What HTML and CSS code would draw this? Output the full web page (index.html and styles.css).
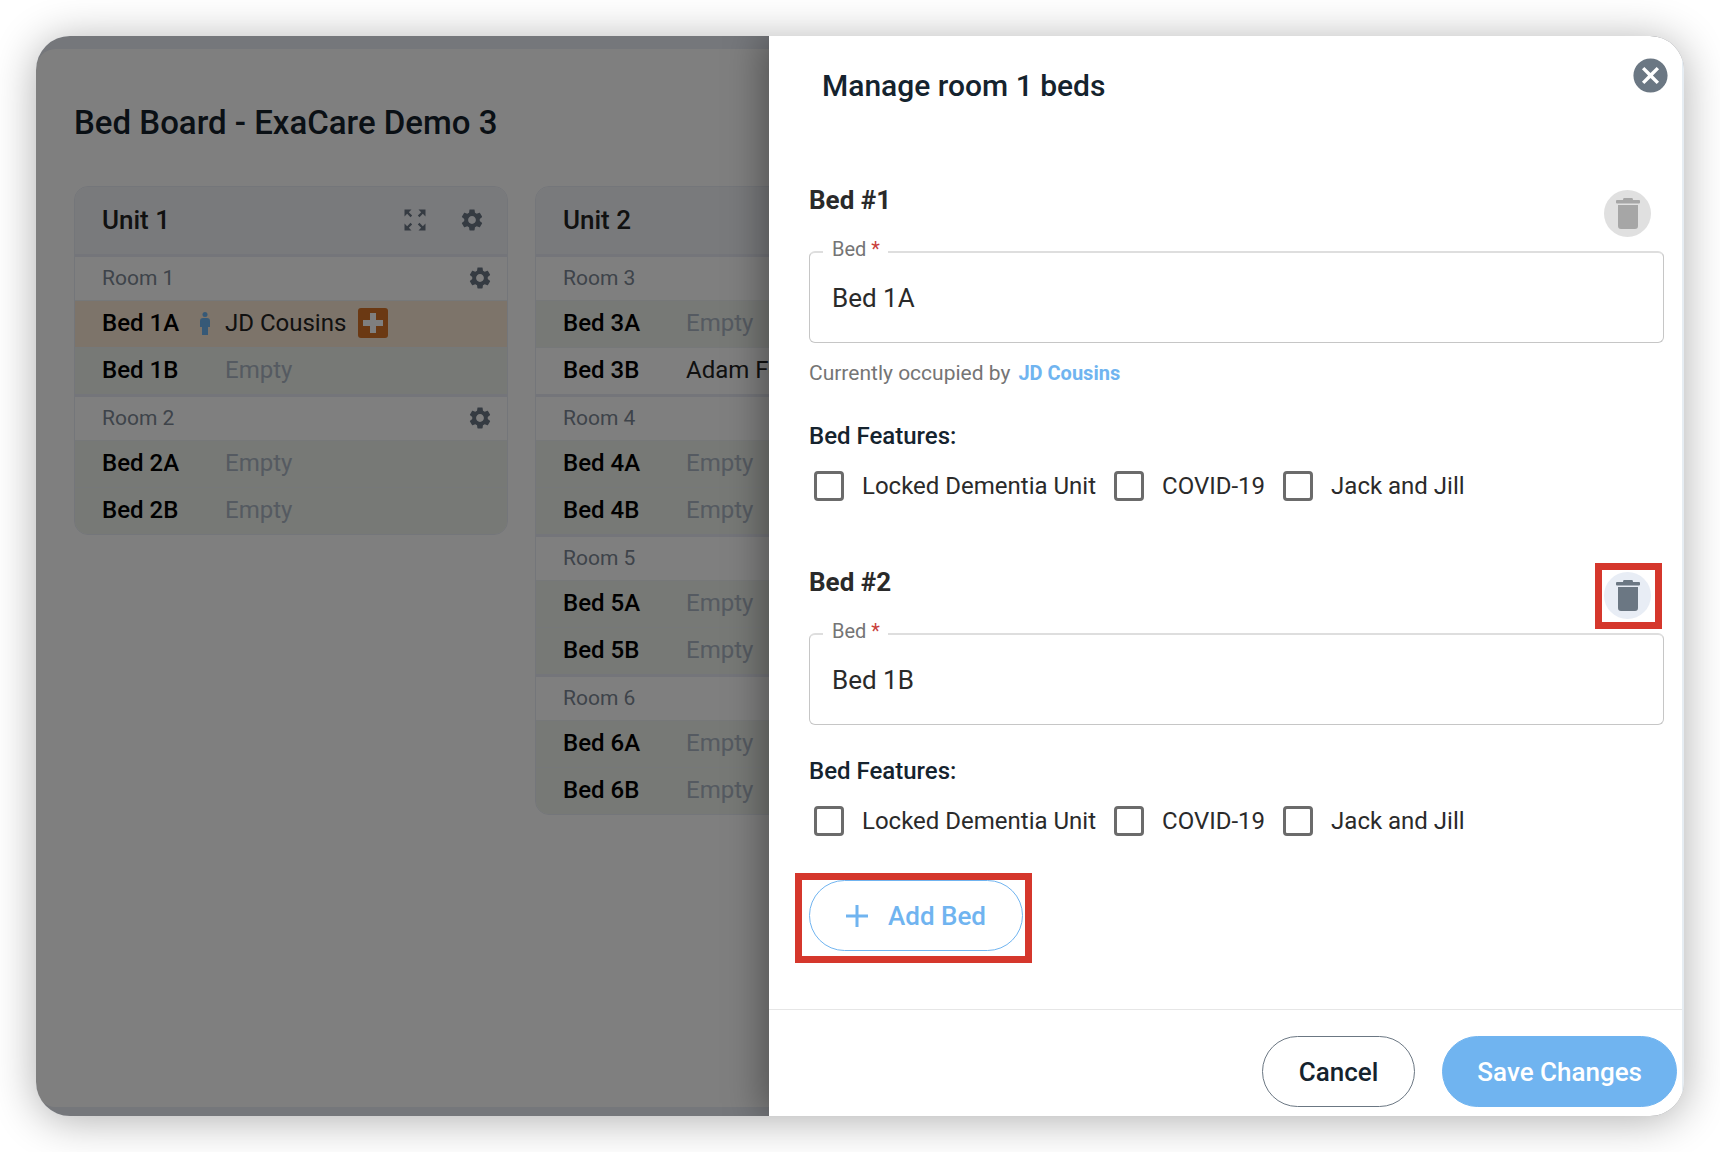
FILE: index.html
```html
<!DOCTYPE html>
<html lang="en">
<head>
<meta charset="utf-8">
<title>Bed Board</title>
<link rel="stylesheet" href="styles.css">
</head>
<body>
<svg class="sprite" aria-hidden="true">
  <symbol id="gear" viewBox="0 0 24 24"><path d="M19.14 12.94c.04-.3.06-.61.06-.94 0-.32-.02-.64-.07-.94l2.03-1.58c.18-.14.23-.41.12-.61l-1.92-3.32c-.12-.22-.37-.29-.59-.22l-2.39.96c-.5-.38-1.03-.7-1.62-.94l-.36-2.54c-.04-.24-.24-.41-.48-.41h-3.84c-.24 0-.43.17-.47.41l-.36 2.54c-.59.24-1.13.57-1.62.94l-2.39-.96c-.22-.08-.47 0-.59.22L2.74 8.87c-.12.21-.08.47.12.61l2.03 1.58c-.05.3-.09.63-.09.94s.02.64.07.94l-2.03 1.58c-.18.14-.23.41-.12.61l1.92 3.32c.12.22.37.29.59.22l2.39-.96c.5.38 1.03.7 1.62.94l.36 2.54c.05.24.24.41.48.41h3.84c.24 0 .44-.17.47-.41l.36-2.54c.59-.24 1.13-.56 1.62-.94l2.39.96c.22.08.47 0 .59-.22l1.92-3.32c.12-.22.07-.47-.12-.61l-2.01-1.58zM12 15.6c-1.98 0-3.6-1.62-3.6-3.6s1.62-3.6 3.6-3.6 3.6 1.62 3.6 3.6-1.62 3.6-3.6 3.6z"/></symbol>
  <symbol id="expand" viewBox="0 0 24 24"><path d="M15 3l2.3 2.3-2.89 2.87 1.42 1.42L18.7 6.7 21 9V3zM3 9l2.3-2.3 2.87 2.89 1.42-1.42L6.7 5.3 9 3H3zm6 12l-2.3-2.3 2.89-2.87-1.42-1.42L5.3 17.3 3 15v6zm12-6l-2.3 2.3-2.87-2.89-1.42 1.42 2.89 2.87L15 21h6z"/></symbol>
  <symbol id="trash" viewBox="0 0 24 31"><path d="M8 0h8q1 0 1 2h6q1 0 1 1v1.500q0 1-1 1H1q-1 0-1-1V3q0-1 1-1h6q0-2 1-2zM2 7h20v21q0 3-3 3H5q-3 0-3-3z"/></symbol>
  <symbol id="close" viewBox="0 0 24 24"><path d="M12 2C6.470 2 2 6.470 2 12s4.470 10 10 10 10-4.470 10-10S17.530 2 12 2zm5 13.590L15.590 17 12 13.410 8.410 17 7 15.590 10.590 12 7 8.410 8.410 7 12 10.590 15.590 7 17 8.410 13.410 12 17 15.590z"/></symbol>
  <symbol id="person" viewBox="0 0 10 23"><circle cx="5" cy="2.500" r="2.500"/><path d="M3 6h4q3 0 3 3v6H8v8H2v-8H0V9q0-3 3-3z"/></symbol>
</svg>

<div class="window">
  <main class="board">
    <h1 class="board-title">Bed Board - ExaCare Demo 3</h1>
    <div class="units">
      <section class="unit">
        <header class="unit-head">
          <h2>Unit 1</h2>
          <button class="icon-btn" aria-label="Expand unit 1"><svg width="28" height="28"><use href="#expand"/></svg></button>
          <button class="icon-btn" aria-label="Unit 1 settings"><svg width="26" height="26"><use href="#gear"/></svg></button>
        </header>
        <div class="room">
          <div class="room-head"><h3>Room 1</h3><button class="icon-btn" aria-label="Room 1 settings"><svg width="26" height="26"><use href="#gear"/></svg></button></div>
          <ul>
            <li class="bed hospital"><b>Bed 1A</b><svg class="person" width="10" height="23"><use href="#person"/></svg><span class="name">JD Cousins</span><svg class="cross" width="30" height="30" viewBox="0 0 30 30"><rect width="30" height="30" rx="3" fill="#d67226"/><path d="M12 5h6v7h7v6h-7v7h-6v-7H5v-6h7z" fill="#fff"/></svg></li>
            <li class="bed empty"><b>Bed 1B</b><span class="name">Empty</span></li>
          </ul>
        </div>
        <div class="room">
          <div class="room-head"><h3>Room 2</h3><button class="icon-btn" aria-label="Room 2 settings"><svg width="26" height="26"><use href="#gear"/></svg></button></div>
          <ul>
            <li class="bed empty"><b>Bed 2A</b><span class="name">Empty</span></li>
            <li class="bed empty"><b>Bed 2B</b><span class="name">Empty</span></li>
          </ul>
        </div>
      </section>
      <section class="unit">
        <header class="unit-head"><h2>Unit 2</h2></header>
        <div class="room">
          <div class="room-head"><h3>Room 3</h3></div>
          <ul>
            <li class="bed empty"><b>Bed 3A</b><span class="name">Empty</span></li>
            <li class="bed"><b>Bed 3B</b><span class="name">Adam Fo</span></li>
          </ul>
        </div>
        <div class="room">
          <div class="room-head"><h3>Room 4</h3></div>
          <ul>
            <li class="bed empty"><b>Bed 4A</b><span class="name">Empty</span></li>
            <li class="bed empty"><b>Bed 4B</b><span class="name">Empty</span></li>
          </ul>
        </div>
        <div class="room">
          <div class="room-head"><h3>Room 5</h3></div>
          <ul>
            <li class="bed empty"><b>Bed 5A</b><span class="name">Empty</span></li>
            <li class="bed empty"><b>Bed 5B</b><span class="name">Empty</span></li>
          </ul>
        </div>
        <div class="room">
          <div class="room-head"><h3>Room 6</h3></div>
          <ul>
            <li class="bed empty"><b>Bed 6A</b><span class="name">Empty</span></li>
            <li class="bed empty"><b>Bed 6B</b><span class="name">Empty</span></li>
          </ul>
        </div>
      </section>
    </div>
  </main>

  <div class="scrim"></div>

  <aside class="drawer" role="dialog" aria-labelledby="drawer-title">
    <header class="drawer-head">
      <h2 id="drawer-title">Manage room 1 beds</h2>
      <button class="close" aria-label="Close"><svg width="41" height="41"><use href="#close"/></svg></button>
    </header>

    <form class="drawer-body">
      <section class="bed-form">
        <div class="bed-form-head">
          <h3>Bed #1</h3>
          <div class="trash-wrap"><button type="button" class="trash" disabled aria-label="Delete bed 1"><svg width="24" height="31"><use href="#trash"/></svg></button></div>
        </div>
        <fieldset class="field">
          <legend><label for="bed1">Bed <span class="req">*</span></label></legend>
          <input id="bed1" type="text" value="Bed 1A">
        </fieldset>
        <p class="occupied">Currently occupied by <a href="#">JD Cousins</a></p>
        <h4>Bed Features:</h4>
        <div class="features">
          <label><input type="checkbox">Locked Dementia Unit</label>
          <label><input type="checkbox">COVID-19</label>
          <label><input type="checkbox">Jack and Jill</label>
        </div>
      </section>

      <section class="bed-form">
        <div class="bed-form-head">
          <h3>Bed #2</h3>
          <div class="trash-wrap"><button type="button" class="trash" aria-label="Delete bed 2"><svg width="24" height="31"><use href="#trash"/></svg></button><span class="mark mark-trash"></span></div>
        </div>
        <fieldset class="field">
          <legend><label for="bed2">Bed <span class="req">*</span></label></legend>
          <input id="bed2" type="text" value="Bed 1B">
        </fieldset>
        <h4>Bed Features:</h4>
        <div class="features">
          <label><input type="checkbox">Locked Dementia Unit</label>
          <label><input type="checkbox">COVID-19</label>
          <label><input type="checkbox">Jack and Jill</label>
        </div>
      </section>

      <div class="add-wrap">
        <button type="button" class="pill add"><svg width="22" height="22" viewBox="0 0 22 22"><path d="M11 0v22M0 11h22" stroke="currentColor" stroke-width="3"/></svg>Add Bed</button>
        <span class="mark mark-add"></span>
      </div>
    </form>

    <footer class="drawer-foot">
      <button class="pill cancel">Cancel</button>
      <button class="pill save">Save Changes</button>
    </footer>
  </aside>
</div>
</body>
</html>
```
FILE: styles.css
```css
* { box-sizing: border-box; }

body {
  margin: 0;
  padding: 36px;
  min-height: 100vh;
  display: grid;
  background: #fff;
  color: #2a2a2a;
  font-family: Roboto, "Liberation Sans", sans-serif;
}

h1, h2, h3, h4, p, ul { margin: 0; padding: 0; }
ul { list-style: none; }
button { font: inherit; cursor: pointer; }
svg { display: block; fill: currentColor; flex: none; }
.sprite { position: absolute; width: 0; height: 0; }

/* Board, scrim and drawer share one grid cell */
.window {
  display: grid;
  grid-template-columns: minmax(0, 1fr);
  overflow: hidden;
  border-radius: 34px;
  background: #eaeef6;
  box-shadow: 0 4px 44px rgba(0, 0, 0, 0.32);
}
.board, .scrim, .drawer { grid-area: 1 / 1; }
.scrim { z-index: 1; background: rgba(0, 0, 0, 0.5); }

/* Board */
.board {
  margin: 13px 0 9px;
  padding: 54px 38px 38px;
  border-radius: 20px;
  background: #fff;
}
.board-title {
  margin-bottom: 43px;
  color: #15212b;
  font-size: 33px;
  font-weight: 500;
  line-height: 40px;
}
.units { display: flex; align-items: flex-start; gap: 27px; }
.unit {
  flex: none;
  width: 434px;
  overflow: hidden;
  border: 1px solid #e8ecf4;
  border-radius: 14px;
}
.unit-head {
  display: flex;
  align-items: center;
  gap: 30px;
  height: 70px;
  padding: 0 22px 2px 27px;
  border-bottom: 3px solid #e8ebf4;
  background: #f2f4f8;
}
.unit-head h2 {
  flex: 1;
  color: #222;
  font-size: 26px;
  font-weight: 500;
}
.icon-btn { padding: 0; border: 0; background: none; color: #6b7785; }
.room + .room { border-top: 3px solid #e8ebf4; }
.room-head {
  display: flex;
  align-items: center;
  justify-content: space-between;
  height: 43px;
  padding: 0 14px 2px 27px;
}
.room-head h3 { color: #7c8794; font-size: 21px; font-weight: 400; }
.bed {
  display: grid;
  grid-template-columns: 98px 25px auto 1fr;
  align-items: center;
  height: 47px;
  padding: 0 0 2px 27px;
  border-top: 1px solid #edf0f3;
  color: #222;
  font-size: 24px;
}
.bed b { color: #000; font-weight: 500; }
.name { grid-column: 3; }
.bed.empty { background: #eef2ec; }
.bed.empty .name { color: #aab5c3; }
.bed.hospital { background: #fae8d4; }
.person { color: #6db2ee; }
.cross { margin-left: 12px; }

/* Drawer */
.drawer {
  z-index: 2;
  justify-self: end;
  display: flex;
  flex-direction: column;
  width: 915px;
  max-width: 100%;
  border-right: 2px solid #e6edf3;
  background: #fff;
  box-shadow: -6px 0 36px rgba(0, 0, 0, 0.36);
}
.drawer-head {
  display: flex;
  align-items: flex-start;
  justify-content: space-between;
  min-height: 148px;
  padding: 19px 11px 0 53px;
}
.drawer-head h2 {
  margin-top: 13px;
  color: #15232e;
  font-size: 30px;
  font-weight: 500;
  line-height: 36px;
}
.close { padding: 0; border: 0; background: none; color: #6b7783; }

.drawer-body {
  flex: 1;
  display: flex;
  flex-direction: column;
  gap: 65px;
  padding: 0 18px 56px 40px;
}
.bed-form-head {
  display: flex;
  align-items: flex-start;
  justify-content: space-between;
  padding-right: 13px;
}
.bed-form-head h3 { font-size: 26px; font-weight: 700; line-height: 32px; }
.trash-wrap { position: relative; margin-top: 6px; }
.trash {
  display: grid;
  place-items: center;
  width: 47px;
  height: 47px;
  padding: 0;
  border: 0;
  border-radius: 50%;
  background: #e8edf5;
  color: #6b7783;
}
.trash:disabled { background: #e0e0e0; color: #a6a6a6; }

.field {
  margin: 0;
  padding: 0 22px;
  border: 1px solid #c6c6c6;
  border-top: 2px solid #dedede;
  border-radius: 6px;
}
.field legend {
  margin-left: -9px;
  padding: 0 8px 5px 9px;
  color: #757575;
  font-size: 20px;
  line-height: 24px;
}
.req { color: #c9403c; }
.field input {
  display: block;
  width: 100%;
  height: 63px;
  margin-bottom: 13px;
  padding: 0;
  border: 0;
  outline: 0;
  background: none;
  color: #2a2a2a;
  font: inherit;
  font-size: 26px;
}

.occupied {
  display: flex;
  gap: 8px;
  margin-top: 18px;
  margin-bottom: 37px;
  color: #757575;
  font-size: 21px;
  line-height: 24px;
}
.occupied a {
  color: #70b4f0;
  font-size: 20px;
  font-weight: 700;
  text-decoration: none;
}
.bed-form h4 {
  color: #15232e;
  font-size: 24px;
  font-weight: 500;
  line-height: 28px;
}
.field + h4 { margin-top: 32px; }
.features {
  display: flex;
  flex-wrap: wrap;
  gap: 18px;
  margin-top: 21px;
  padding-left: 5px;
}
.features label {
  display: flex;
  align-items: center;
  gap: 18px;
  font-size: 24px;
  line-height: 30px;
}
.features input {
  appearance: none;
  width: 30px;
  height: 30px;
  margin: 0;
  border: 3px solid #6b6b6b;
  border-radius: 4px;
}

.pill {
  height: 71px;
  padding: 0 36px;
  border: 1px solid #6b7783;
  border-radius: 36px;
  background: #fff;
  color: #15232e;
  font-size: 26px;
  font-weight: 500;
}
.add-wrap { position: relative; align-self: flex-start; margin-top: -21px; }
.add {
  display: flex;
  align-items: center;
  gap: 20px;
  border-color: #70b4f0;
  color: #70b4f0;
}
.save {
  padding: 0 34px;
  border-color: #70b4f0;
  background: #70b4f0;
  color: #fff;
}

/* Red call-out frames laid over the highlighted controls */
.mark { position: absolute; border: 7px solid #d5372c; pointer-events: none; }
.mark-trash { inset: -9px -11px -10px -9px; }
.mark-add { inset: -7px -9px -12px -14px; }

.drawer-foot {
  display: flex;
  justify-content: flex-end;
  gap: 27px;
  padding: 26px 5px 9px;
  border-top: 1px solid #e6e6e6;
}
```
